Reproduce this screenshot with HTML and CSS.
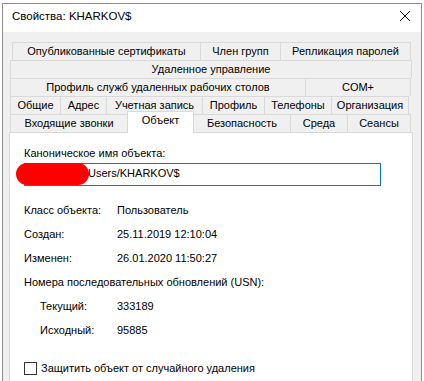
FILE: index.html
```html
<!DOCTYPE html>
<html lang="ru">
<head>
<meta charset="utf-8">
<title>Свойства: KHARKOV$</title>
<link rel="stylesheet" href="styles.css">
</head>
<body>
<div class="window">
  <div class="titlebar">
    <span class="title">Свойства: KHARKOV$</span>
    <svg class="close" width="10" height="10" viewBox="0 0 10 10"><path d="M0 0L10 10M10 0L0 10" stroke="#000" stroke-width="1"/></svg>
  </div>
  <div class="content">
    <div class="tabs">
      <div class="tabrow row1">
        <div class="tab">Опубликованные сертификаты</div>
        <div class="tab">Член групп</div>
        <div class="tab last">Репликация паролей</div>
      </div>
      <div class="tabrow row2">
        <div class="tab last">Удаленное управление</div>
      </div>
      <div class="tabrow row3">
        <div class="tab">Профиль служб удаленных рабочих столов</div>
        <div class="tab last">COM+</div>
      </div>
      <div class="tabrow row4">
        <div class="tab">Общие</div>
        <div class="tab">Адрес</div>
        <div class="tab">Учетная запись</div>
        <div class="tab">Профиль</div>
        <div class="tab">Телефоны</div>
        <div class="tab last">Организация</div>
      </div>
      <div class="tabrow row5">
        <div class="tab">Входящие звонки</div>
        <div class="tab selected">Объект</div>
        <div class="tab">Безопасность</div>
        <div class="tab">Среда</div>
        <div class="tab last">Сеансы</div>
      </div>
    </div>
    <div class="panel">
      <div class="label">Каноническое имя объекта:</div>
      <div class="field"><span class="redact"></span><span class="fieldtext">Users/KHARKOV$</span></div>
      <div class="info">
        <div>Класс объекта:</div><div>Пользователь</div>
        <div>Создан:</div><div>25.11.2019 12:10:04</div>
        <div>Изменен:</div><div>26.01.2020 11:50:27</div>
        <div class="span">Номера последовательных обновлений (USN):</div>
        <div class="indent">Текущий:</div><div>333189</div>
        <div class="indent">Исходный:</div><div>95885</div>
      </div>
      <div class="check"><span class="box"></span><span>Защитить объект от случайного удаления</span></div>
    </div>
  </div>
</div>
</body>
</html>
```
FILE: styles.css
```css
html, body {
  margin: 0;
  padding: 0;
  background: #ffffff;
  overflow: hidden;
}
body {
  font-family: "Liberation Sans", Arial, sans-serif;
  font-size: 11px;
  color: #000;
  height: 381px;
}
.window {
  margin: 3px 2px 0 2px;
  border: 1px solid #8c8c8c;
  border-bottom: none;
  height: 377px;
  background: #f0f0f0;
  display: flex;
  flex-direction: column;
}
.titlebar {
  height: 28px;
  background: #fff;
  display: flex;
  align-items: flex-start;
  padding-left: 9px;
}
.title {
  padding-top: 4px;
  line-height: 16px;
  font-size: 11.5px;
}
.close {
  margin-left: auto;
  margin-right: 11px;
  margin-top: 7px;
}
.content {
  flex: 1;
  padding-top: 10px;
  display: flex;
  flex-direction: column;
  min-height: 0;
}
.tabs {
  display: flex;
  flex-direction: column;
}
.tabrow {
  display: grid;
  height: 18px;
  margin-left: 7px;
  width: 401px;
}
.row1 { margin-left: 9px; width: 399px; grid-template-columns: 188px 80px 1fr; }
.row2 { grid-template-columns: 1fr; width: 402px; }
.row3 { grid-template-columns: 295px 1fr; }
.row4 { grid-template-columns: 50px 46px 96px 62px 67px 1fr; width: 399px; }
.row5 { grid-template-columns: 117px 67px 96px 57px 1fr; }
.tab {
  border-top: 1px solid #d9d9d9;
  border-left: 1px solid #d9d9d9;
  background: #f0f0f0;
  text-align: center;
  line-height: 17px;
  white-space: nowrap;
  overflow: hidden;
}
.tab.last {
  border-right: 1px solid #d9d9d9;
}
.tab.selected {
  position: relative;
  z-index: 1;
  background: #fff;
  border-right: 1px solid #d9d9d9;
  margin-top: -3px;
  height: 21px;
  line-height: 16px;
}
.row5 .selected + .tab { border-left: none; }
.panel {
  margin-left: 6px;
  width: 404px;
  box-sizing: border-box;
  flex: 1;
  background: #fff;
  border: 1px solid #d9d9d9;
  border-bottom: none;
  padding: 12px 0 0 14px;
}
.label {
  line-height: 16px;
}
.field {
  position: relative;
  margin-top: 2px;
  width: 357px;
  height: 23px;
  box-sizing: border-box;
  border: 1px solid #0078d7;
  padding-left: 63px;
  line-height: 19px;
}
.redact {
  position: absolute;
  left: -9px;
  top: -1px;
  width: 73px;
  height: 22px;
  border-radius: 11px;
  background: #ff0000;
}
.info {
  margin-top: 12px;
  display: grid;
  grid-template-columns: 93px 1fr;
  grid-auto-rows: 24px;
  line-height: 24px;
}
.info .span { grid-column: 1 / 3; }
.info .indent { padding-left: 16px; }
.check {
  margin-top: 18px;
  display: flex;
  align-items: center;
  line-height: 16px;
}
.box {
  width: 13px;
  height: 13px;
  box-sizing: border-box;
  border: 1px solid #333;
  background: #fff;
  margin-right: 4px;
}
```
